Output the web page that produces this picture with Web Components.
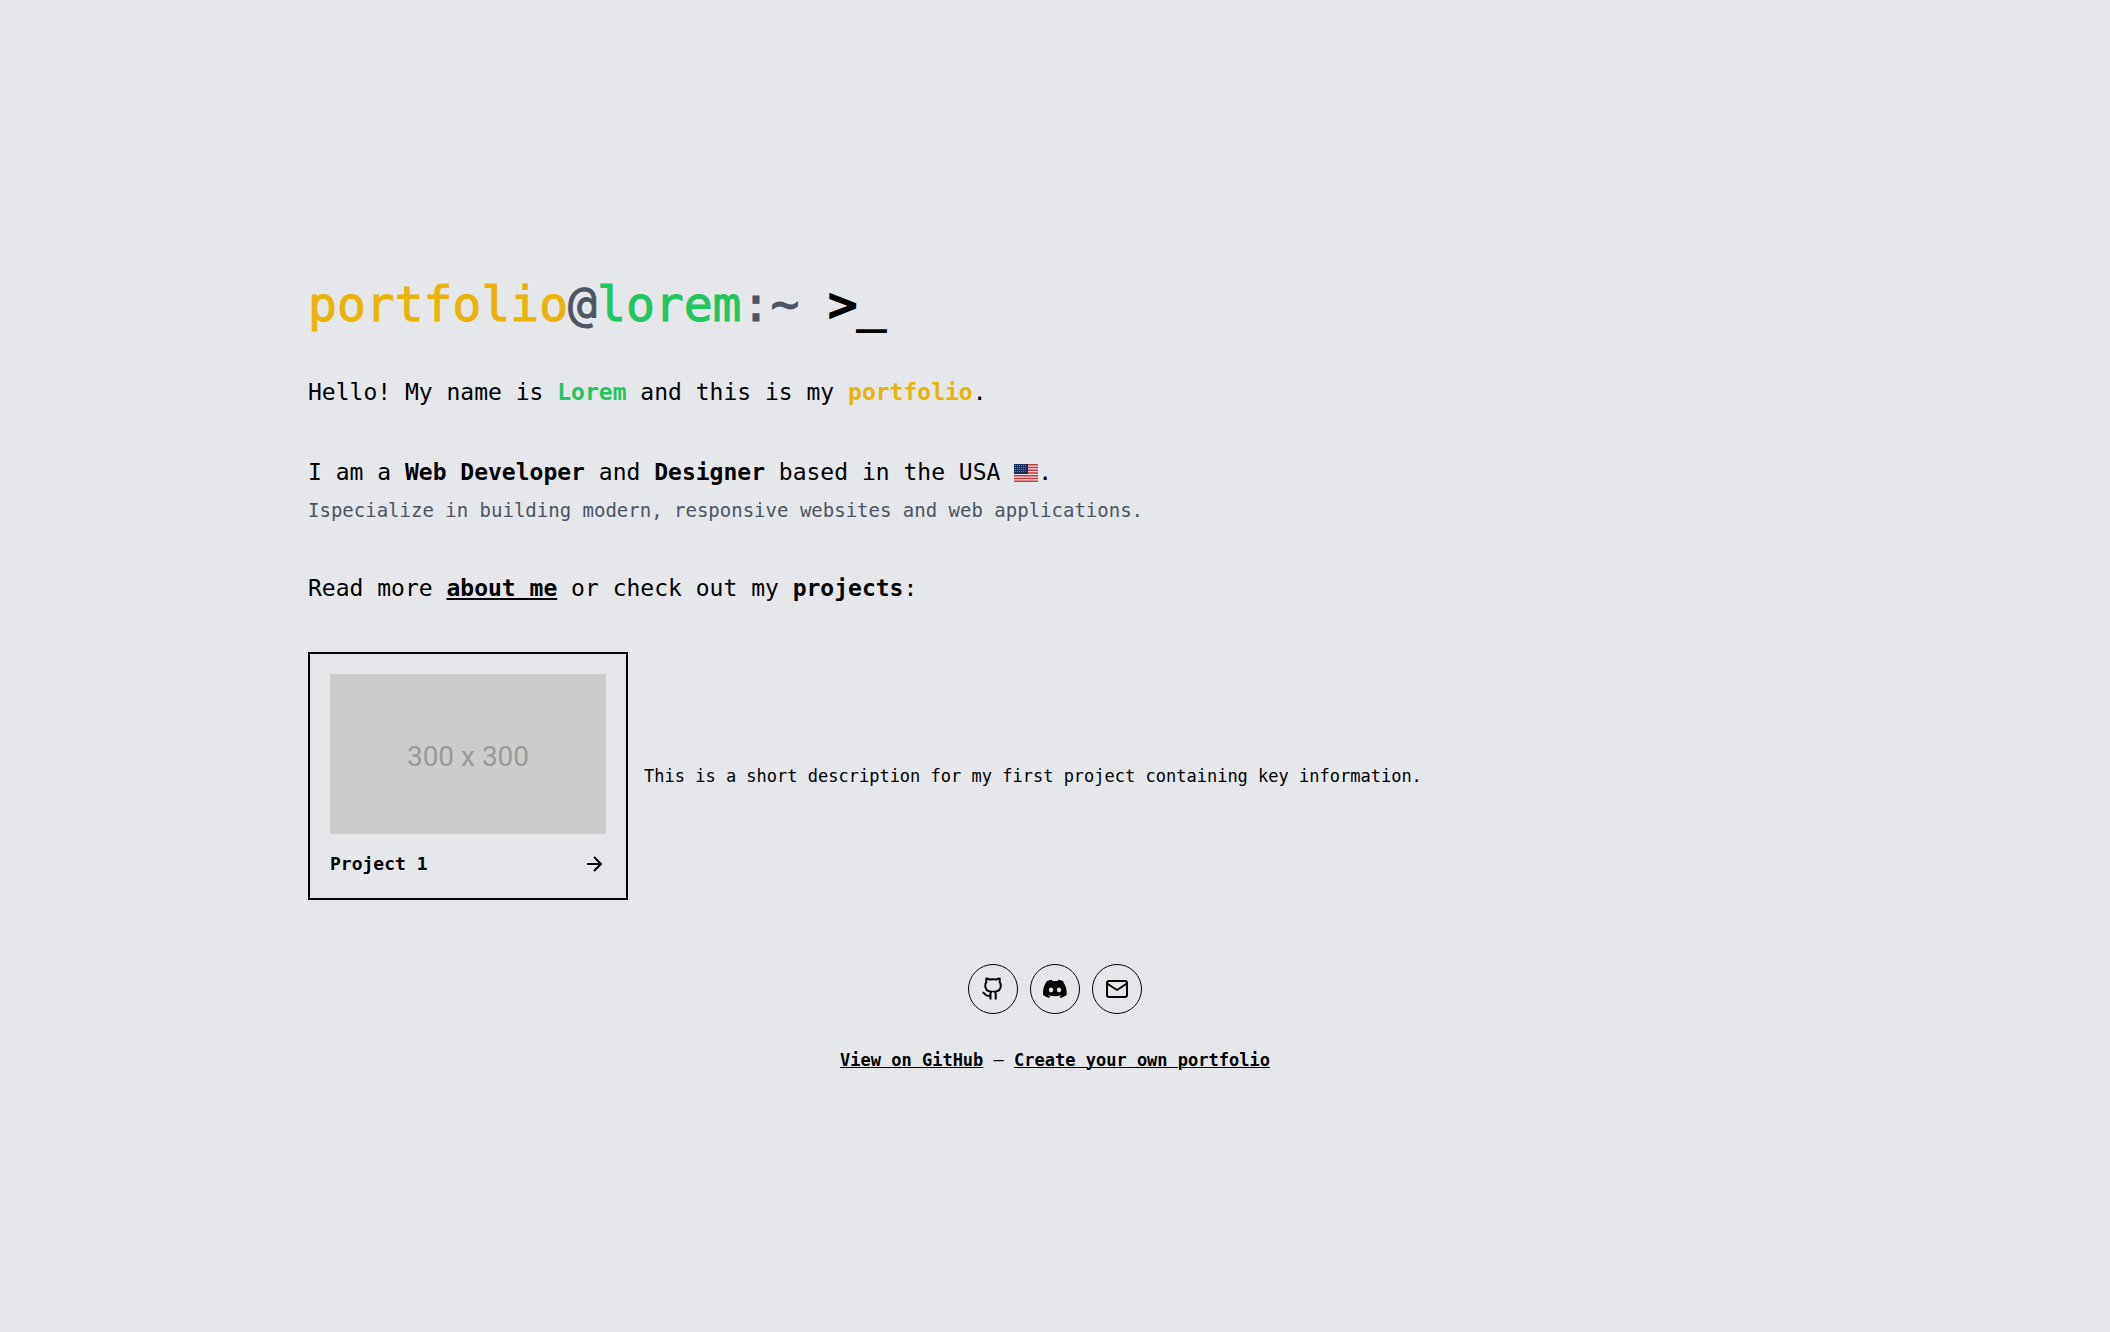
<!DOCTYPE html>
<html lang="en">
<head>
<meta charset="utf-8">
<title>portfolio@lorem</title>
<style>
  html { background: #e5e7eb; }
  body { margin: 0; color: #000; font-family: "DejaVu Sans Mono", "Liberation Mono", monospace; font-variant-ligatures: none; }
</style>
</head>
<body>
<portfolio-page></portfolio-page>
<script>
const define = (name, html) => {
  const template = document.createElement('template');
  template.innerHTML = html;
  customElements.define(name, class extends HTMLElement {
    constructor() {
      super();
      this.attachShadow({ mode: 'open' }).append(template.content.cloneNode(true));
    }
    connectedCallback() {
      const link = this.shadowRoot.querySelector('a');
      if (link && this.hasAttribute('href')) link.href = this.getAttribute('href');
      if (link && this.hasAttribute('label')) link.setAttribute('aria-label', this.getAttribute('label'));
    }
  });
};

define('prompt-title', `
<style>
  :host { display: block; }
  h1 { margin: 0; font-size: 48px; line-height: 48px; font-weight: 500; -webkit-text-stroke: 1px currentColor; }
  .user { color: #eab308; }
  .host { color: #22c55e; }
  .path { color: #4b5563; }
  .cursor { -webkit-text-stroke: 2px currentColor; }
</style>
<h1><span class="user">portfolio</span><span class="path">@</span><span class="host">lorem</span><span class="path">:~</span> <span class="cursor">&gt;_</span></h1>`);

define('us-flag', `
<style>
  :host { display: inline-block; width: 24px; height: 18px; vertical-align: -2px; }
  svg { display: block; }
</style>
<svg width="24" height="18" viewBox="0 0 24 18" role="img" aria-label="USA flag">
  <rect width="24" height="18" fill="#f4dfe2"/>
  <path d="M0 .7h24M0 3.5h24M0 6.2h24M0 9h24M0 11.8h24M0 14.5h24M0 17.3h24" stroke="#bd3d44" stroke-width="1.4"/>
  <rect width="14" height="10" fill="#192f5d"/>
  <path d="M1 1.500h12M1 3.500h12M1 5.500h12M1 7.500h12" stroke="#6d7c9a" stroke-width="1" stroke-dasharray="1 1"/>
</svg>`);

define('intro-text', `
<style>
  :host { display: flex; flex-direction: column; gap: 48px; }
  p { margin: 0; font-size: 23px; line-height: 32px; }
  .about { display: flex; flex-direction: column; gap: 8px; }
  .note { font-size: 19px; line-height: 28px; color: #4b5563; }
  .green { color: #22c55e; }
  .yellow { color: #eab308; }
  a { color: inherit; font-weight: 700; text-decoration: underline; text-decoration-thickness: 2px; text-underline-offset: 2px; }
</style>
<p>Hello! My name is <b class="green">Lorem</b> and this is my <b class="yellow">portfolio</b>.</p>
<div class="about">
  <p>I am a <b>Web Developer</b> and <b>Designer</b> based in the USA <us-flag></us-flag>.</p>
  <p class="note">Ispecialize in building modern, responsive websites and web applications.</p>
</div>
<p>Read more <a href="#about">about me</a> or check out my <b>projects</b>:</p>`);

define('project-card', `
<style>
  :host { display: flex; align-items: center; gap: 16px; }
  a { box-sizing: border-box; flex: 0 0 320px; display: flex; flex-direction: column; gap: 16px; padding: 20px; border: 2px solid #000; color: inherit; text-decoration: none; }
  .thumb { display: grid; place-items: center; aspect-ratio: 276 / 160; background: #ccc; color: #999; font: 28px/32px Roboto, sans-serif; padding-top: 6px; box-sizing: border-box; }
  .row { display: flex; justify-content: space-between; align-items: center; font-size: 18px; line-height: 28px; font-weight: 700; }
  p { margin: 0; font-size: 17px; line-height: 28px; }
</style>
<a href="#project"><span class="thumb">300 x 300</span>
  <span class="row"><slot name="title"></slot>
    <svg width="24" height="24" viewBox="0 0 24 24" fill="none" stroke="#000" stroke-width="2" aria-hidden="true"><path d="M5 12h14M12 5l7 7-7 7"/></svg>
  </span></a>
<p><slot></slot></p>`);

define('social-link', `
<style>
  :host { display: block; }
  a { box-sizing: border-box; display: grid; place-items: center; width: 50px; height: 50px; border: 1px solid #000; border-radius: 50%; color: inherit; }
</style>
<a><slot></slot></a>`);

define('text-link', `
<style>
  :host { display: inline; }
  a { color: inherit; font-weight: 700; text-decoration: underline; text-decoration-thickness: 1px; text-underline-offset: 1px; }
</style>
<a><slot></slot></a>`);

define('site-footer', `
<style>
  :host { display: flex; flex-direction: column; align-items: center; gap: 32px; }
  nav { display: flex; gap: 12px; }
  svg { display: block; }
  p { margin: 0; font-size: 17px; line-height: 28px; }
</style>
<nav aria-label="Social">
  <social-link href="#github" label="GitHub"><svg width="24" height="24" viewBox="0 0 24 24" fill="none" stroke="#000" stroke-width="2"><path d="M9.500 22.500v-5.500c0-1 .2-1.700.9-2.300C6.500 14.300 4.200 12.500 4.200 8.500c0-1.400.4-2.500 1.200-3.400-.3-1-.3-2.200 0-3.600 1.200 0 2.300.4 3.500 1.100 2-.4 4.200-.4 6.200 0 1.200-.7 2.300-1.100 3.500-1.100.3 1.400.3 2.600 0 3.600.8.900 1.200 2 1.200 3.400 0 4-2.300 5.800-6.200 6.200.8.600 1.100 1.300 1.100 2.300v5.500"/><path d="M1.500 15.500c2.500 0 2.200 3.200 5 3.200h3"/></svg></social-link>
  <social-link href="#discord" label="Discord"><svg width="24" height="24" viewBox="0 0 24 24" fill="#000"><path d="M20.317 4.370a19.800 19.800 0 0 0-4.885-1.515c-.21.375-.444.864-.608 1.250a18.270 18.270 0 0 0-5.487 0c-.165-.394-.406-.875-.618-1.250a19.740 19.740 0 0 0-4.885 1.515C.533 9.046-.32 13.580.1 18.058a19.900 19.900 0 0 0 5.993 3.030c.462-.63.874-1.295 1.226-1.994a13 13 0 0 1-1.872-.892l.372-.292c3.928 1.793 8.180 1.793 12.062 0l.373.292a12.300 12.300 0 0 1-1.873.892c.36.698.772 1.362 1.225 1.993a19.840 19.840 0 0 0 6.002-3.030c.5-5.177-.838-9.674-3.549-13.660zM8.020 15.330c-1.183 0-2.157-1.085-2.157-2.419 0-1.333.956-2.419 2.157-2.419 1.210 0 2.176 1.096 2.157 2.420 0 1.333-.956 2.418-2.157 2.418zm7.975 0c-1.183 0-2.157-1.085-2.157-2.419 0-1.333.955-2.419 2.157-2.419 1.210 0 2.176 1.096 2.157 2.420 0 1.333-.946 2.418-2.157 2.418z"/></svg></social-link>
  <social-link href="#mail" label="Email"><svg width="24" height="24" viewBox="0 0 24 24" fill="none" stroke="#000" stroke-width="2" stroke-linecap="round" stroke-linejoin="round"><rect x="2" y="4" width="20" height="16" rx="2"/><path d="M2 6.500l10 6.500 10-6.500"/></svg></social-link>
</nav>
<p><text-link href="#source">View on GitHub</text-link> – <text-link href="#create">Create your own portfolio</text-link></p>`);

define('portfolio-page', `
<style>
  :host { box-sizing: border-box; min-height: 100vh; display: flex; flex-direction: column; justify-content: center; align-items: center; padding: 22px 20px 0; }
  main { width: 100%; max-width: 1494px; display: flex; flex-direction: column; gap: 48px; }
  site-footer { margin-top: 16px; }
</style>
<main>
  <prompt-title></prompt-title>
  <intro-text></intro-text>
  <project-card><span slot="title">Project 1</span>This is a short description for my first project containing key information.</project-card>
  <site-footer></site-footer>
</main>`);
</script>
</body>
</html>
